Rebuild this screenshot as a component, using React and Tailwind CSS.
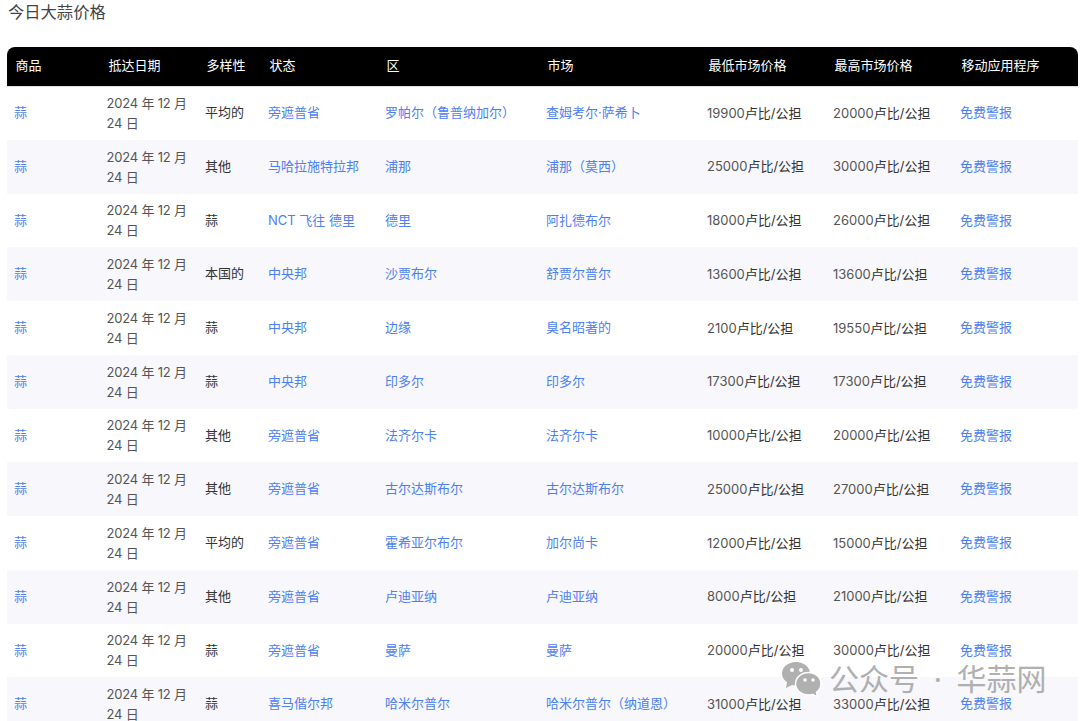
import React from 'react';

const rows = [
  ['平均的', '旁遮普省', '罗帕尔（鲁普纳加尔）', '查姆考尔·萨希卜', '19900', '20000'],
  ['其他', '马哈拉施特拉邦', '浦那', '浦那（莫西）', '25000', '30000'],
  ['蒜', 'NCT 飞往 德里', '德里', '阿扎德布尔', '18000', '26000'],
  ['本国的', '中央邦', '沙贾布尔', '舒贾尔普尔', '13600', '13600'],
  ['蒜', '中央邦', '边缘', '臭名昭著的', '2100', '19550'],
  ['蒜', '中央邦', '印多尔', '印多尔', '17300', '17300'],
  ['其他', '旁遮普省', '法齐尔卡', '法齐尔卡', '10000', '20000'],
  ['其他', '旁遮普省', '古尔达斯布尔', '古尔达斯布尔', '25000', '27000'],
  ['平均的', '旁遮普省', '霍希亚尔布尔', '加尔尚卡', '12000', '15000'],
  ['其他', '旁遮普省', '卢迪亚纳', '卢迪亚纳', '8000', '21000'],
  ['蒜', '旁遮普省', '曼萨', '曼萨', '20000', '30000'],
  ['蒜', '喜马偕尔邦', '哈米尔普尔', '哈米尔普尔（纳道恩）', '31000', '33000'],
];

const headers = ['商品', '抵达日期', '多样性', '状态', '区', '市场', '最低市场价格', '最高市场价格', '移动应用程序'];
const widths = ['w-[93px]', 'w-[98px]', 'w-[63px]', 'w-[117px]', 'w-[161px]', 'w-[161px]', 'w-[126px]', 'w-[127px]', 'w-[125px]'];

function Price({ value }) {
  return <td className="px-[7px] pt-px text-[#555]">{value}<span className="text-[#333]">卢比/公担</span></td>;
}

export default function App() {
  return (
    <div className="relative h-[721px] w-[1080px] overflow-hidden bg-white font-['Inter','Noto_Sans_CJK_SC',sans-serif] text-[13px] text-[#333]">
      <h1 className="pl-2 pt-px pb-px text-[16.3px] leading-[22px] font-normal text-[#444]">今日大蒜价格</h1>

      <div className="mt-[23px] ml-[7px] w-[1071px]">
        <table className="w-full table-fixed border-collapse">
          <colgroup>
            {widths.map((w, i) => <col key={i} className={w} />)}
          </colgroup>
          <thead>
            <tr className="h-[39px] border-b border-[#ddd] bg-black text-left text-white">
              {headers.map((h, i) => (
                <th
                  key={h}
                  className={`pr-[7px] pb-[2px] pl-[8.5px] text-[13px] font-normal ${i === 0 ? 'rounded-tl-lg' : ''} ${i === 8 ? 'rounded-tr-lg' : ''}`}
                >
                  {h}
                </th>
              ))}
            </tr>
          </thead>
          <tbody>
            {rows.map((r, i) => (
              <tr key={i} className={`h-[53.75px] ${i % 2 === 1 ? 'bg-[#f7f7fc]' : 'bg-white'}`}>
                <td className="px-[7px] text-[#4d80f5]">蒜</td>
                <td className="pr-[7px] pl-[6.5px] leading-5 tracking-[-0.2px] text-[#555]">2024 年 12 月 24 日</td>
                <td className="px-[7px]">{r[0]}</td>
                <td className="px-[7px] text-[#4d80f5]">{r[1]}</td>
                <td className="px-[7px] text-[#4d80f5]">{r[2]}</td>
                <td className="px-[7px] text-[#4d80f5]">{r[3]}</td>
                <Price value={r[4]} />
                <Price value={r[5]} />
                <td className="px-[7px] text-[#4d80f5]">免费警报</td>
              </tr>
            ))}
          </tbody>
        </table>
      </div>

      {/* WeChat watermark */}
      <div className="absolute top-[660px] left-[781px] flex items-center text-[#a8a8a8]">
        <svg width="41" height="37" viewBox="0 0 41 37" fill="#b0b0b0">
          <path d="M15 2C7.300 2 1 7.100 1 13.500c0 3.600 2 6.700 5 8.800L5 28l6-3.100c1.300.3 2.600.4 4 .4 7.700 0 14-5.300 14-11.800S22.700 2 15 2z" />
          <circle cx="11" cy="10" r="2" fill="#fff" />
          <circle cx="20" cy="10" r="2" fill="#fff" />
          <path
            d="M27.500 12.500c-7 0-13 5-13 11.300S20.500 35 27.500 35c1.400 0 2.700-.2 3.900-.6l5.100 2.600-1-4.700c2.900-2 4.500-5 4.500-8.500 0-6.300-5.500-11.300-12.500-11.300z"
            stroke="#fff"
            strokeWidth="1.500"
          />
          <circle cx="24" cy="20" r="1.700" fill="#fff" />
          <circle cx="32" cy="20" r="1.700" fill="#fff" />
        </svg>
        <span className="ml-[7px] text-[30px] leading-9 [word-spacing:6px] whitespace-nowrap opacity-90">公众号 · 华蒜网</span>
      </div>
    </div>
  );
}
